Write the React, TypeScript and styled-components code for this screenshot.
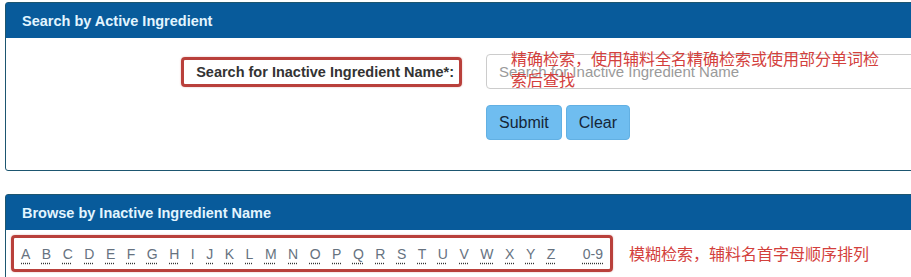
import styled, { createGlobalStyle } from "styled-components"

const GlobalStyle = createGlobalStyle`
  html, body {
    margin: 0;
    padding: 0;
    background: #ffffff;
    overflow: hidden;
  }
  body {
    font-family: "Liberation Sans", Arial, sans-serif;
    color: #333333;
  }
`

const Page = styled.div`
  padding: 2px 0 0 5px;
  width: 940px;
`

const Panel = styled.section<{ $gap?: number }>`
  border: 1px solid #1d5670;
  border-radius: 3px 0 0 3px;
  margin-top: ${(p) => p.$gap ?? 0}px;
  background: #fff;
`

const PanelHeader = styled.div`
  height: 35px;
  display: flex;
  align-items: center;
  padding-left: 16px;
  background: #085b9b;
  color: #e2f5ff;
  font-weight: bold;
  font-size: 14.5px;
`

const SearchBody = styled.div`
  padding: 16px 0 30px;
  position: relative;
`

const FormRow = styled.div`
  display: grid;
  grid-template-columns: 480px 1fr;
  align-items: center;
`

const LabelCell = styled.div`
  display: flex;
  justify-content: flex-end;
  padding-right: 24px;
`

const MarkBox = styled.div`
  border: 3px solid #b9403b;
  border-radius: 4px;
  box-shadow: 0 0 2px rgba(185, 64, 59, 0.4);
`

const FieldLabel = styled(MarkBox)`
  font-weight: bold;
  font-size: 14.5px;
  color: #333;
  padding: 5px 5px 5px 12px;
  line-height: 14px;
`

const TextInput = styled.input`
  height: 35px;
  box-sizing: border-box;
  border: 1px solid #cccccc;
  border-radius: 4px;
  padding: 0 12px;
  font-family: "Liberation Sans", Arial, sans-serif;
  font-size: 15px;
  width: 100%;
  outline: none;
  &::placeholder {
    color: #9a9a9a;
  }
`

const ButtonRow = styled.div`
  display: flex;
  gap: 4px;
  margin: 16px 0 0 480px;
`

const Button = styled.button`
  height: 35px;
  padding: 0 12px;
  background: #6fbdf0;
  border: 1px solid #62b0e3;
  border-radius: 4px;
  color: #152638;
  font-family: "Liberation Sans", Arial, sans-serif;
  font-size: 16px;
`

const Note = styled.div`
  font-family: "Noto Sans CJK SC", "Liberation Sans", sans-serif;
  color: #d3403c;
  font-size: 16px;
  line-height: 21px;
`

const FloatingNote = styled(Note)`
  position: absolute;
  left: 505px;
  top: 10px;
  width: 375px;
`

const BrowseBody = styled.div`
  padding: 5px 0 10px 5px;
  display: flex;
  align-items: center;
  gap: 16px;
`

const LetterBox = styled(MarkBox)`
  display: flex;
  align-items: center;
  height: 31px;
  padding: 0 7px 0 7px;
  gap: 11.5px;
`

const LetterLink = styled.a<{ $wide?: boolean }>`
  font-size: 14px;
  color: #66727f;
  text-decoration: underline dotted #333;
  text-underline-offset: 4px;
  margin-left: ${(p) => (p.$wide ? 16 : 0)}px;
`

const letters = "ABCDEFGHIJKLMNOPQRSTUVWXYZ".split("")

export default function App() {
  return (
    <>
      <GlobalStyle />
      <Page>
        <Panel>
          <PanelHeader>Search by Active Ingredient</PanelHeader>
          <SearchBody>
            <FormRow>
              <LabelCell>
                <FieldLabel>Search for Inactive Ingredient Name*:</FieldLabel>
              </LabelCell>
              <TextInput placeholder="Search for Inactive Ingredient Name" />
            </FormRow>
            <ButtonRow>
              <Button>Submit</Button>
              <Button>Clear</Button>
            </ButtonRow>
            <FloatingNote>
              精确检索，使用辅料全名精确检索或使用部分单词检索后查找
            </FloatingNote>
          </SearchBody>
        </Panel>

        <Panel $gap={23}>
          <PanelHeader>Browse by Inactive Ingredient Name</PanelHeader>
          <BrowseBody>
            <LetterBox>
              {letters.map((l) => (
                <LetterLink key={l}>{l}</LetterLink>
              ))}
              <LetterLink $wide>0-9</LetterLink>
            </LetterBox>
            <Note>模糊检索，辅料名首字母顺序排列</Note>
          </BrowseBody>
        </Panel>
      </Page>
    </>
  )
}
